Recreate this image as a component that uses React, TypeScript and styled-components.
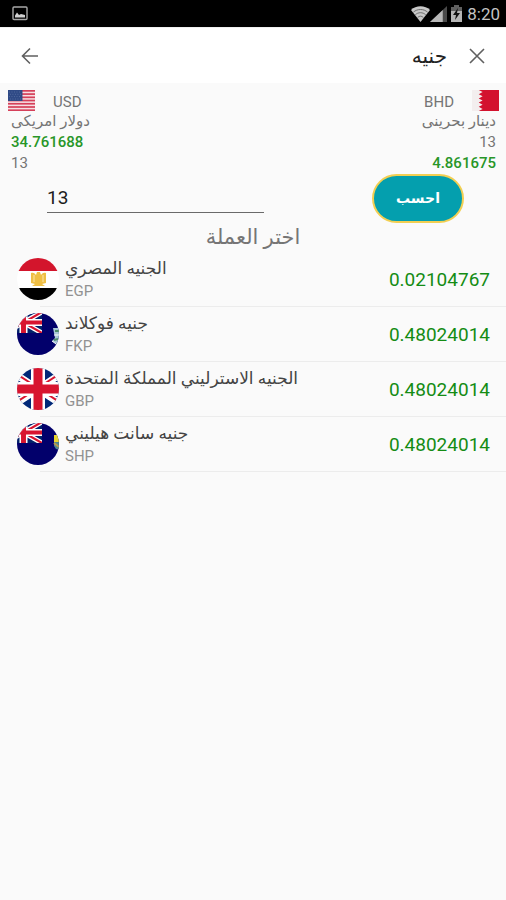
import React from "react";
import styled, { createGlobalStyle } from "styled-components";

const GlobalStyle = createGlobalStyle`
  *, *::before, *::after { box-sizing: border-box; }
  body {
    margin: 0;
    background: #fafafa;
    color: #757575;
    font-family: Roboto, "DejaVu Sans", sans-serif;
  }
  button, input { font: inherit; }
`;

const Screen = styled.div`
  display: flex;
  flex-direction: column;
  min-height: 100vh;
`;

const StatusBar = styled.div`
  display: flex;
  align-items: center;
  justify-content: space-between;
  height: 27px;
  padding: 0 6px 0 12px;
  background: #000;
  color: #c4c4c4;
  font-size: 17px;
  line-height: 28px;
`;

const StatusIcons = styled.div`
  display: flex;
  align-items: center;
`;

const Clock = styled.time`
  margin-left: 3px;
`;

const SearchBar = styled.header`
  display: flex;
  align-items: center;
  gap: 12px;
  height: 56px;
  padding: 0 17px 0 18px;
  background: #fff;
  border-top: 1px solid #f0f0f0;
`;

const IconButton = styled.button`
  display: flex;
  align-items: center;
  justify-content: center;
  width: 24px;
  height: 32px;
  padding: 0;
  border: 0;
  background: none;
  color: #606060;
  cursor: pointer;
`;

const SearchInput = styled.input`
  flex: 1;
  min-width: 0;
  height: 40px;
  padding: 0 6px;
  border: 0;
  outline: 0;
  background: none;
  color: #222;
  font-size: 20px;
`;

const Pair = styled.section`
  display: flex;
  justify-content: space-between;
  padding: 7px 7px 0 8px;
`;

const Side = styled.div<{ $end?: boolean }>`
  display: flex;
  flex-direction: column;
  align-items: ${(p) => (p.$end ? "flex-end" : "flex-start")};
`;

const SideHead = styled.div`
  display: flex;
  align-items: flex-start;
  gap: 18px;
  height: 21px;
  font-size: 15px;
  line-height: 24px;
`;

const SideLine = styled.div<{ $green?: boolean }>`
  padding: 0 3px;
  font-size: 15px;
  line-height: 21px;
  height: 21px;
  font-weight: ${(p) => (p.$green ? 500 : 400)};
  color: ${(p) => (p.$green ? "#289628" : "#757575")};
`;

const AmountForm = styled.form`
  display: flex;
  align-items: flex-start;
  justify-content: space-between;
  padding: 0 42px 0 47px;
`;

const AmountInput = styled.input`
  flex: 0 1 217px;
  min-width: 0;
  height: 39px;
  padding: 8px 0 0;
  border: 0;
  border-bottom: 1px solid #6a6a6a;
  border-radius: 0;
  outline: 0;
  background: none;
  color: #1c1c1c;
  font-size: 19px;
`;

const CalcButton = styled.button`
  width: 92px;
  height: 49px;
  padding: 0 0 2px;
  border: 2px solid #f2cf52;
  border-radius: 25px;
  background: #049fae;
  color: #fff;
  font-size: 14px;
  font-weight: 700;
  cursor: pointer;
`;

const Heading = styled.h1`
  margin: 0;
  height: 29px;
  font-size: 21px;
  font-weight: 400;
  line-height: 28px;
  text-align: center;
`;

const List = styled.ul`
  margin: 0;
  padding: 0;
  list-style: none;
`;

const Row = styled.li`
  display: flex;
  align-items: center;
  gap: 6px;
  height: 55px;
  padding: 0 16px 2px 17px;
  background: linear-gradient(#ececec, #ececec) 40px 100% / 100% 1px no-repeat;
`;

const Names = styled.div`
  flex: 1;
  min-width: 0;
`;

const Name = styled.div`
  height: 22px;
  font-size: 17px;
  line-height: 22px;
  color: #444;
  white-space: nowrap;
`;

const Code = styled.div`
  height: 22px;
  font-size: 15px;
  line-height: 24px;
  color: #929292;
`;

const Rate = styled.div`
  padding-top: 2px;
  font-size: 19px;
  line-height: 24px;
  color: #148c14;
`;

function UnionJack() {
  return (
    <>
      <path fill="#012169" d="M0 0h60v40H0z" />
      <path stroke="#fff" strokeWidth="9" d="m0 0 60 40M60 0 0 40" />
      <path stroke="#d8152f" strokeWidth="4" d="m0 0 60 40M60 0 0 40" />
      <path stroke="#fff" strokeWidth="13" d="M30 0v40M0 20h60" />
      <path stroke="#d8152f" strokeWidth="8" d="M30 0v40M0 20h60" />
    </>
  );
}

function UsFlag() {
  return (
    <svg width="27" height="21" viewBox="0 0 28 21" preserveAspectRatio="none" aria-hidden="true">
      <path fill="#f6dfe3" d="M0 0h28v21H0z" />
      {[0, 1, 2, 3, 4, 5, 6].map((i) => (
        <rect key={i} y={i * 3.23} width="28" height="1.7" fill="#d5405a" />
      ))}
      <path fill="#2f4a86" d="M0 0h15v11H0z" />
      <path stroke="#5d74a6" strokeDasharray="1 1.6" strokeWidth=".8" d="M1 2h13M2 4.3h12M1 6.6h13M2 9h12" />
    </svg>
  );
}

function BahrainFlag() {
  return (
    <svg width="27" height="21" viewBox="0 0 28 21" preserveAspectRatio="none" aria-hidden="true">
      <path fill="#f3eeee" d="M0 0h28v21H0z" />
      <path
        fill="#d3122e"
        d="M28 0H7l4 2.1-4 2.1 4 2.1-4 2.1 4 2.1-4 2.1 4 2.1-4 2.1 4 2.1L7 21h21z"
      />
    </svg>
  );
}

type FlagKind = "egypt" | "falkland" | "uk" | "helena";

function RoundFlag({ kind }: { kind: FlagKind }) {
  const clip = `round-${kind}`;
  return (
    <svg width="42" height="42" viewBox="0 0 42 42" fill="none" aria-hidden="true">
      <clipPath id={clip}>
        <circle cx="21" cy="21" r="21" />
      </clipPath>
      <g clipPath={`url(#${clip})`}>
        {kind === "egypt" && (
          <>
            <path fill="#fff" d="M0 0h42v42H0z" />
            <path fill="#d3152c" d="M0 0h42v13H0z" />
            <path fill="#000" d="M0 30h42v12H0z" />
            <path
              fill="#efbf45"
              d="M14 15c3-1 4 1 5 2l1-3h3l1 3c1-1 2-3 5-2v10l-4 1 3 2H15l3-2-4-1z"
            />
            <path stroke="#fbe6ad" d="M17 17v7M26 17v7" />
          </>
        )}
        {kind === "uk" && (
          <>
            <path fill="#012878" d="M0 0h42v42H0z" />
            <path stroke="#fff" strokeWidth="7" d="m-11 0 64 42M53 0l-64 42" />
            <path stroke="#d8152f" strokeWidth="2" d="m-11-1 26 17M53 41 27 24M53-1 27 16M-11 41l26-17" />
            <path stroke="#fff" strokeWidth="14" d="M21 0v42M0 21h42" />
            <path stroke="#d8152f" strokeWidth="9" d="M21 0v42M0 21h42" />
          </>
        )}
        {(kind === "falkland" || kind === "helena") && (
          <>
            <path fill="#02006b" d="M0 0h42v42H0z" />
            <svg x="-12" y="-1" width="37" height="21" viewBox="0 0 60 40" preserveAspectRatio="none">
              <UnionJack />
            </svg>
            {kind === "falkland" ? (
              <>
                <path fill="#a9c8d6" d="M36 15h8v10c0 4-3 5-5 6l-4-3 3-3z" />
                <path stroke="#4e8b6a" strokeWidth="2" d="M38 18h4M37 27l4-1" />
                <path stroke="#fff" d="M37 22h5M35 28l4 3" />
              </>
            ) : (
              <>
                <path fill="#e8d431" d="M37 12h6v7h-6z" />
                <path fill="#4d8791" d="M37 19h6v8l-4-1-2-3z" />
                <path stroke="#b99b4e" strokeWidth="2" d="m37 20 5 4" />
              </>
            )}
          </>
        )}
      </g>
    </svg>
  );
}

function PictureIcon() {
  return (
    <svg width="16" height="15" viewBox="0 0 16 15" fill="none" aria-hidden="true">
      <rect x="1" y="1" width="14" height="12.5" rx="1" stroke="#a8a8a8" strokeWidth="1.4" />
      <path fill="#d0d0d0" d="M3 11.5V9.5l2-3 2 2.5 2-1 4 1v2.5z" />
    </svg>
  );
}

function WifiIcon() {
  return (
    <svg width="19" height="16" viewBox="0 0 20 16" preserveAspectRatio="none" fill="none" aria-hidden="true">
      <path fill="#c8c8c8" d="M0 4c5-5 15-5 20 0L10 16z" />
      <path stroke="#555" strokeWidth=".8" d="M2.5 6.2c4-3.6 11-3.6 15 0M4.5 8.8c3-2.8 8-2.8 11 0M7 11.4c2-1.6 4-1.6 6 0" />
    </svg>
  );
}

function SignalIcon() {
  return (
    <svg width="17" height="16" viewBox="0 0 16 16" preserveAspectRatio="none" aria-hidden="true">
      <path fill="#4a4a4a" d="M16 0v16H0z" />
      <path fill="#b8b8b8" d="M12 4v12H0z" />
    </svg>
  );
}

function BatteryIcon() {
  return (
    <svg width="17" height="17" viewBox="0 0 17 17" aria-hidden="true">
      <path fill="#606060" d="M7 0h5v2h3v5H4V2h3z" />
      <path fill="#b5b5b5" d="M4 6h11v11H4z" />
      <path fill="#111" d="m11 3-5 7h3l-1 5 5-7h-3z" />
    </svg>
  );
}

const rows: { kind: FlagKind; name: string; code: string; rate: string }[] = [
  { kind: "egypt", name: "الجنيه المصري", code: "EGP", rate: "0.02104767" },
  { kind: "falkland", name: "جنيه فوكلاند", code: "FKP", rate: "0.48024014" },
  { kind: "uk", name: "الجنيه الاسترليني المملكة المتحدة", code: "GBP", rate: "0.48024014" },
  { kind: "helena", name: "جنيه سانت هيليني", code: "SHP", rate: "0.48024014" },
];

export default function App() {
  return (
    <Screen lang="ar">
      <GlobalStyle />
      <StatusBar>
        <PictureIcon />
        <StatusIcons>
          <WifiIcon />
          <SignalIcon />
          <BatteryIcon />
          <Clock>8:20</Clock>
        </StatusIcons>
      </StatusBar>
      <SearchBar>
        <IconButton type="button" aria-label="رجوع">
          <svg width="18" height="18" viewBox="0 0 18 18" fill="none" stroke="currentColor" strokeWidth="1.6" aria-hidden="true">
            <path d="M17 9H2M9 1.5 1.5 9 9 16.5" />
          </svg>
        </IconButton>
        <SearchInput dir="rtl" type="text" aria-label="بحث" defaultValue="جنيه" />
        <IconButton type="button" aria-label="مسح">
          <svg width="16" height="16" viewBox="0 0 16 16" fill="none" stroke="currentColor" strokeWidth="1.6" aria-hidden="true">
            <path d="m1 1 14 14M15 1 1 15" />
          </svg>
        </IconButton>
      </SearchBar>
      <Pair>
        <Side>
          <SideHead>
            <UsFlag />
            <span>USD</span>
          </SideHead>
          <SideLine dir="rtl">دولار امريكى</SideLine>
          <SideLine $green>34.761688</SideLine>
          <SideLine>13</SideLine>
        </Side>
        <Side $end>
          <SideHead>
            <span>BHD</span>
            <BahrainFlag />
          </SideHead>
          <SideLine dir="rtl">دينار بحرينى</SideLine>
          <SideLine>13</SideLine>
          <SideLine $green>4.861675</SideLine>
        </Side>
      </Pair>
      <AmountForm onSubmit={(e) => e.preventDefault()}>
        <AmountInput type="text" inputMode="decimal" aria-label="المبلغ" defaultValue="13" />
        <CalcButton type="submit">احسب</CalcButton>
      </AmountForm>
      <Heading dir="rtl">اختر العملة</Heading>
      <List>
        {rows.map((r) => (
          <Row key={r.code}>
            <RoundFlag kind={r.kind} />
            <Names>
              <Name>{r.name}</Name>
              <Code>{r.code}</Code>
            </Names>
            <Rate>{r.rate}</Rate>
          </Row>
        ))}
      </List>
    </Screen>
  );
}
